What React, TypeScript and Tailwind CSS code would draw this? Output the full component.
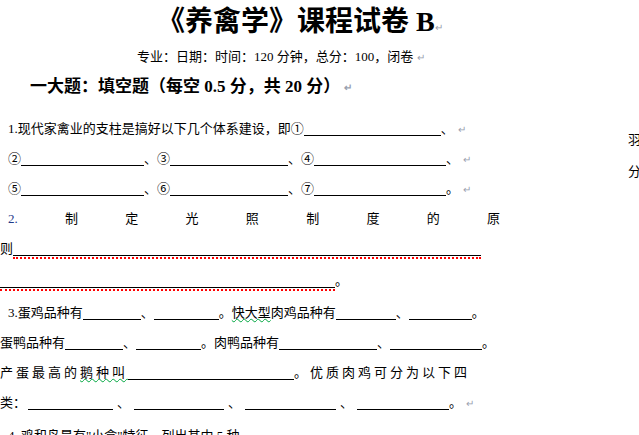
import React from "react";

const U = ({ w, red }: { w: number; red?: boolean }) => (
  <span className="relative inline-block h-[16px]" style={{ width: w }}>
    <span className="absolute left-0 right-0 bottom-[1px] border-b border-black" />
    {red && <span className="absolute left-0 right-0 -bottom-[2px] h-[2px] border-b-2 border-dotted border-[#ff0000]" />}
  </span>
);
const P = () => <span className="text-[10px] text-gray-400 ml-[4px]">↵</span>;
const Row = ({ children, cls = "" }: { children: React.ReactNode; cls?: string }) => (
  <div className={`h-[30px] flex items-center whitespace-nowrap ${cls}`}>{children}</div>
);

export default function App() {
  return (
    <div
      className="relative w-[639px] h-[435px] overflow-hidden bg-white text-black text-[13px]"
      style={{ fontFamily: '"Liberation Serif", "Noto Sans CJK SC", serif' }}
    >
      <div className="h-[42px] pt-[4px] pl-[157px] text-[28px] font-bold leading-[36px]">
        《养禽学》课程试卷 B<span className="text-[10px] font-normal text-gray-400">↵</span>
      </div>
      <div className="h-[30px] flex items-center pl-[137px] text-[13px]">
        专业：日期：时间：120 分钟，总分：100，闭卷<P />
      </div>
      <div className="h-[30px] flex items-center pl-[30px] text-[17px] font-bold">
        一大题：填空题（每空 0.5 分，共 20 分）<P />
      </div>
      <div className="h-[12px]" />
      <div className="pl-[8px]">
        <Row>1.现代家禽业的支柱是搞好以下几个体系建设，即①<U w={137} />、<P /></Row>
        <Row>②<U w={123} />、③<U w={118} />、④<U w={132} />、<P /></Row>
        <Row>⑤<U w={123} />、⑥<U w={118} />、⑦<U w={132} />。<P /></Row>
        <Row cls="justify-between w-[492px]">
          <span className="text-[#1f3a8a]">2.</span>
          {"制定光照制度的原".split("").map((c, i) => <span key={i}>{c}</span>)}
        </Row>
      </div>
      <Row>则<U w={468} red /></Row>
      <Row cls="h-[34px]"><U w={335} red />。</Row>
      <Row cls="pl-[8px]">3.蛋鸡品种有<U w={58} />、<U w={65} />。<span className="underline decoration-wavy decoration-green-600 decoration-1">快大型</span>肉鸡品种有<U w={60} />、<U w={63} />。</Row>
      <Row>蛋鸭品种有<U w={58} />、<U w={65} />。肉鸭品种有<U w={98} />、<U w={92} />。</Row>
      <Row cls="tracking-[3px]">产蛋最高的<span className="underline decoration-wavy decoration-green-600 decoration-1">鹅种叫</span><U w={166} />。优质肉鸡可分为以下四</Row>
      <Row>类：<span className="w-[2px]" /><U w={85} /><span className="px-[4px]">、</span><U w={90} /><span className="px-[4px]">、</span><U w={91} /><span className="px-[4px]">、</span><U w={92} />。<P /></Row>
      <div className="h-[30px] flex items-start pt-[8px] pl-[8px] whitespace-nowrap">4. 鸡和鸟是有"小盒"特征，列出其中 5 种</div>
      <div className="absolute left-[628px] top-[124px] leading-[32px]">羽<br />分</div>
    </div>
  );
}
